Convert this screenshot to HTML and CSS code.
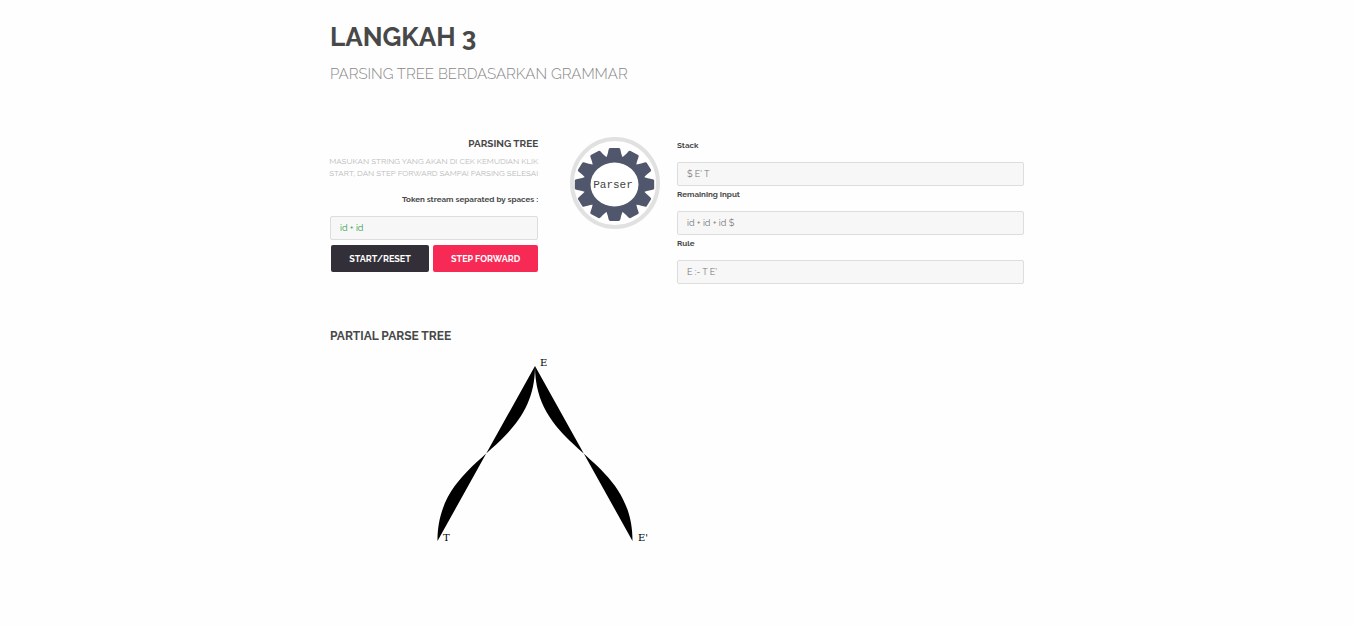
FILE: index.html
```html
<!DOCTYPE html>
<html lang="id">
<head>
<meta charset="utf-8">
<title>Parsing Tree</title>
<link rel="stylesheet" href="styles.css">
</head>
<body>
<main class="container">
  <header class="page-header">
    <h1 class="title">LANGKAH 3</h1>
    <p class="subtitle">PARSING TREE BERDASARKAN GRAMMAR</p>
  </header>

  <section class="parser">
    <form class="controls">
      <h2 class="controls-title">PARSING TREE</h2>
      <p class="hint">MASUKAN STRING YANG AKAN DI CEK KEMUDIAN KLIK<br>START, DAN STEP FORWARD SAMPAI PARSING SELESAI</p>
      <label class="label token-label" for="token">Token stream separated by spaces :</label>
      <input class="field field-token" id="token" type="text" value="id + id">
      <div class="buttons">
        <button class="button button-dark" type="button">START/RESET</button>
        <button class="button button-accent" type="button">STEP FORWARD</button>
      </div>
    </form>

    <div class="emblem">
      <svg class="gear" viewBox="0 0 90 92" role="img" aria-label="Parser">
        <defs><path id="tooth" d="M-8-26C-7-28-6-31-5.600-34Q-5.300-36.400-4-36.400H4Q5.300-36.400 5.600-34C6-31 7-28 8-26Z"/></defs>
        <ellipse cx="45" cy="46" rx="43" ry="44" fill="#fff" stroke="#e1e1e1" stroke-width="4"/>
        <g transform="translate(44.500 47.500) scale(1.090 1)" fill="#50566b">
          <circle r="28"/>
          <use href="#tooth"/>
          <use href="#tooth" transform="rotate(30)"/>
          <use href="#tooth" transform="rotate(60)"/>
          <use href="#tooth" transform="rotate(90)"/>
          <use href="#tooth" transform="rotate(120)"/>
          <use href="#tooth" transform="rotate(150)"/>
          <use href="#tooth" transform="rotate(180)"/>
          <use href="#tooth" transform="rotate(210)"/>
          <use href="#tooth" transform="rotate(240)"/>
          <use href="#tooth" transform="rotate(270)"/>
          <use href="#tooth" transform="rotate(300)"/>
          <use href="#tooth" transform="rotate(330)"/>
          <circle r="22" fill="#fff"/>
        </g>
        <text class="gear-text" x="43" y="51" text-anchor="middle">Parser</text>
      </svg>
    </div>

    <div class="state">
      <label class="label" for="stack">Stack</label>
      <input class="field" id="stack" type="text" value="$ E' T">
      <label class="label" for="remaining">Remaining Input</label>
      <input class="field" id="remaining" type="text" value="id + id + id $">
      <label class="label" for="rule">Rule</label>
      <input class="field" id="rule" type="text" value="E :- T E'">
    </div>
  </section>

  <section>
    <h2 class="tree-title">PARTIAL PARSE TREE</h2>
    <svg class="tree" width="400" height="200" viewBox="0 0 400 200" role="img" aria-label="Parse tree">
      <path d="M205 16C205 103.500 107.500 103.500 107.500 191Z"/>
      <path d="M205 16C205 103.500 302.500 103.500 302.500 191Z"/>
      <text x="210" y="16">E</text>
      <text x="113" y="191">T</text>
      <text x="308" y="191">E'</text>
    </svg>
  </section>
</main>
</body>
</html>
```
FILE: styles.css
```css
* {
  box-sizing: border-box;
}

body {
  margin: 0;
  background: #fefefe;
  color: #484848;
  font-family: Raleway, Lato, "Open Sans", sans-serif;
}

h1, h2, p {
  margin: 0;
}

.container {
  max-width: 694px;
  margin: 0 auto;
  padding: 20px 0;
}

.title {
  font-size: 26px;
  line-height: 34px;
  font-weight: 700;
}

.subtitle {
  margin-top: 10px;
  font-size: 15px;
  line-height: 20px;
  font-weight: 300;
  color: #888;
}

.parser {
  display: grid;
  grid-template-columns: minmax(0, 3fr) minmax(0, 2fr) minmax(0, 5fr);
  margin-top: 53px;
}

.controls {
  display: flex;
  flex-direction: column;
  padding-top: 1px;
  text-align: right;
}

.controls-title {
  font-size: 10px;
  line-height: 12px;
  font-weight: 700;
}

.hint {
  align-self: flex-end;
  margin-top: 5px;
  font-size: 8px;
  line-height: 12px;
  color: #bbb;
  white-space: nowrap;
}

.label {
  display: block;
  font-size: 8px;
  line-height: 12px;
  font-weight: 700;
}

.token-label {
  margin: 14px 0 11px;
}

.field {
  display: block;
  width: 100%;
  height: 24px;
  padding: 0 9px;
  border: 1px solid #ddd;
  border-radius: 2px;
  background: #f7f7f7;
  color: #777;
  font-family: inherit;
  font-size: 9px;
}

.field-token {
  color: #2e9e4f;
}

.buttons {
  display: grid;
  grid-template-columns: 98fr 105fr;
  gap: 4px;
  margin-top: 5px;
  padding-left: 1px;
}

.button {
  height: 27px;
  padding: 0;
  border: 0;
  border-radius: 2px;
  color: #fff;
  font-family: inherit;
  font-size: 9px;
  font-weight: 700;
}

.button-dark {
  background: #322f38;
}

.button-accent {
  background: #f62a55;
}

.emblem {
  display: flex;
  justify-content: flex-end;
  align-items: flex-start;
  padding-right: 17px;
}

.gear {
  width: 90px;
  height: 92px;
}

.gear-text {
  fill: #444;
  font-family: "Liberation Mono", monospace;
  font-size: 11px;
}

.state {
  padding-top: 2px;
}

.state .label {
  margin-bottom: 11px;
}

.state .field {
  margin-bottom: 2px;
}

.tree-title {
  margin-top: 42px;
  font-size: 12px;
  line-height: 16px;
  font-weight: 700;
}

.tree {
  display: block;
  margin-top: 6px;
  fill: #000;
  font-family: "DejaVu Serif", serif;
  font-size: 10px;
}
```
